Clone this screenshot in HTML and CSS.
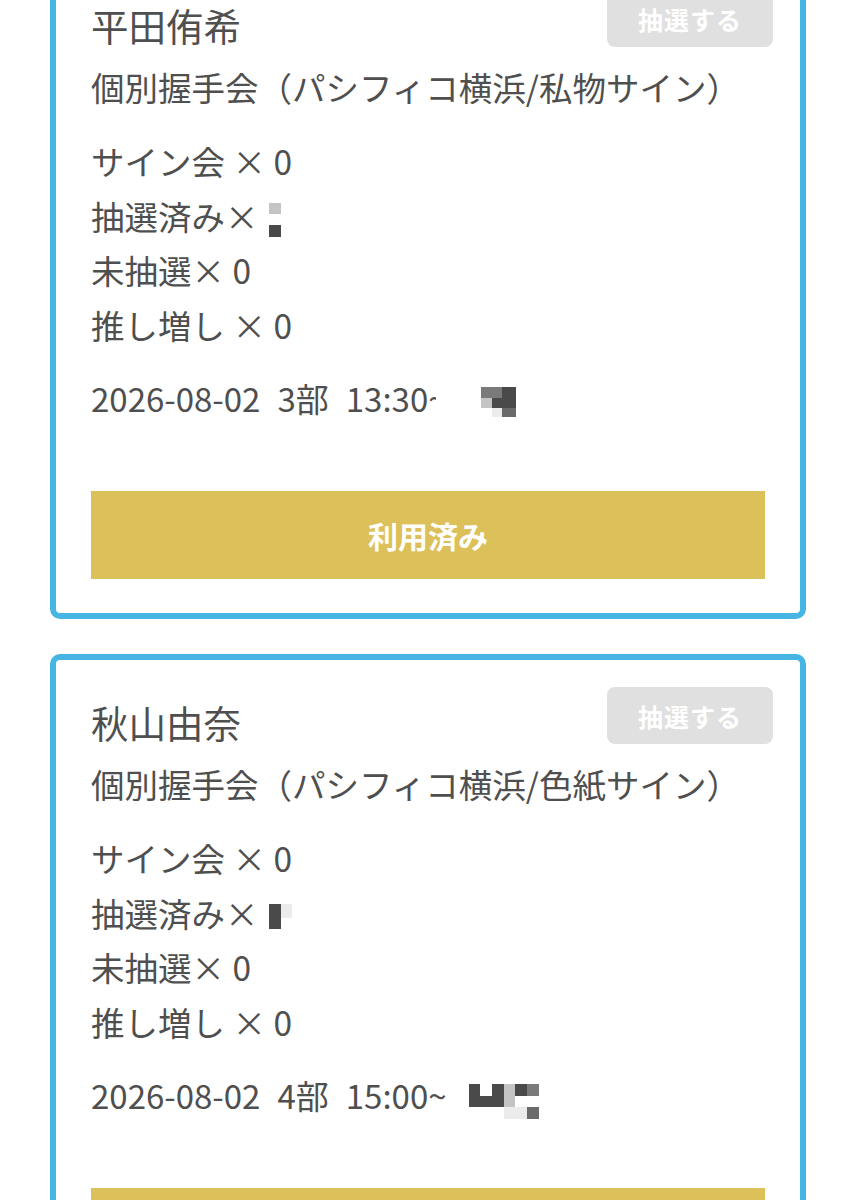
FILE: index.html
```html
<!DOCTYPE html>
<html lang="ja">
<head>
<meta charset="utf-8">
<title>抽選</title>
<link rel="stylesheet" href="styles.css">
</head>
<body>
<div class="list">
  <section class="card">
    <div class="head">
      <div class="name">平田侑希</div>
      <button class="draw" type="button">抽選する</button>
    </div>
    <div class="event">個別握手会（パシフィコ横浜/私物サイン）</div>
    <ul class="stats">
      <li>サイン会 × 0</li>
      <li>抽選済み×<span class="mosaic m1"><i class="l"></i><i class="w"></i><i class="d"></i></span></li>
      <li>未抽選× 0</li>
      <li>推し増し × 0</li>
    </ul>
    <div class="date"><span>2026-08-02</span><span class="sp">3部</span><span class="sp">13:30<span class="cut">~</span></span><span class="mosaic m2"><i class="m"></i><i class="m"></i><i class="d"></i><i class="l"></i><i class="d"></i><i class="d"></i><i class="w"></i><i class="vl"></i><i class="dm"></i></span></div>
    <button class="used" type="button">利用済み</button>
  </section>
  <section class="card">
    <div class="head">
      <div class="name">秋山由奈</div>
      <button class="draw" type="button">抽選する</button>
    </div>
    <div class="event">個別握手会（パシフィコ横浜/色紙サイン）</div>
    <ul class="stats">
      <li>サイン会 × 0</li>
      <li>抽選済み×<span class="mosaic m3"><i class="d"></i><i class="vl"></i><i class="d"></i><i class="w"></i></span></li>
      <li>未抽選× 0</li>
      <li>推し増し × 0</li>
    </ul>
    <div class="date"><span>2026-08-02</span><span class="sp">4部</span><span class="sp">15:00~</span><span class="mosaic m4"><i class="d"></i><i class="w"></i><i class="d"></i><i class="l"></i><i class="d"></i><i class="m"></i><i class="d"></i><i class="d"></i><i class="d"></i><i class="l"></i><i class="w"></i><i class="w"></i><i class="w"></i><i class="w"></i><i class="w"></i><i class="vl"></i><i class="vl"></i><i class="dm"></i></span></div>
    <button class="used" type="button">利用済み</button>
  </section>
</div>
</body>
</html>
```

FILE: styles.css
```css
* { box-sizing: border-box; }
html, body { margin: 0; padding: 0; background: #ffffff; }
body {
  font-family: "Noto Sans CJK JP", "Noto Sans", sans-serif;
  color: #4f4f4f;
  overflow: hidden;
}
.list {
  display: flex;
  flex-direction: column;
  gap: 35px;
  margin-top: -43px;
  padding: 0 51px 0 50px;
}
.card {
  border: 6px solid #47b5e4;
  border-radius: 10px;
  padding: 35px 35px 34px;
  display: flex;
  flex-direction: column;
}
.head {
  display: flex;
  justify-content: space-between;
  align-items: flex-start;
}
.name {
  font-size: 37.5px;
  line-height: 54px;
}
.draw {
  margin: -8px -8px 0 0;
  width: 166px;
  height: 57px;
  border: 0;
  border-radius: 8px;
  background: #e0e0e0;
  color: #ffffff;
  font-family: inherit;
  font-size: 25px;
  font-weight: 700;
  letter-spacing: 1px;
  padding: 0;
}
.event {
  margin-top: 8px;
  font-size: 33.5px;
  line-height: 54px;
}
.stats {
  list-style: none;
  margin: 20px 0 0;
  padding: 0;
  font-size: 33.5px;
  line-height: 54.5px;
}
.stats li { display: flex; align-items: center; }
.date {
  margin-top: 19px;
  font-size: 33px;
  line-height: 54px;
  display: flex;
  align-items: center;
}
.sp { margin-left: 17px; }
.cut { display: inline-block; width: 8px; overflow: hidden; vertical-align: top; }
.used {
  margin-top: 66px;
  height: 88px;
  border: 0;
  background: #dcc05a;
  color: #ffffff;
  font-family: inherit;
  font-size: 30px;
  font-weight: 700;
  padding: 0;
}
.mosaic { display: inline-grid; }
.mosaic i { display: block; }
.mosaic .d { background: #4a4a4a; }
.mosaic .dm { background: #6a6a6a; }
.mosaic .m { background: #7a7a7a; }
.mosaic .l { background: #c4c4c4; }
.mosaic .vl { background: #ececec; }
.mosaic .w { background: transparent; }
.m1 {
  grid-template-columns: 12px;
  grid-template-rows: 11px 11px 12px;
  margin-left: 10px;
  margin-top: 8px;
}
.m2 {
  grid-template-columns: 11px 10px 14px;
  grid-template-rows: 11px 10px 9px;
  margin-left: 45px;
  margin-top: 8px;
}
.m3 {
  grid-template-columns: 12px 11px;
  grid-template-rows: 14px 11px;
  margin-left: 10px;
  margin-top: 8px;
}
.m4 {
  grid-template-columns: repeat(6, 11.7px);
  grid-template-rows: 12px 11px 12px;
  margin-left: 22px;
  margin-top: 12px;
}
```
